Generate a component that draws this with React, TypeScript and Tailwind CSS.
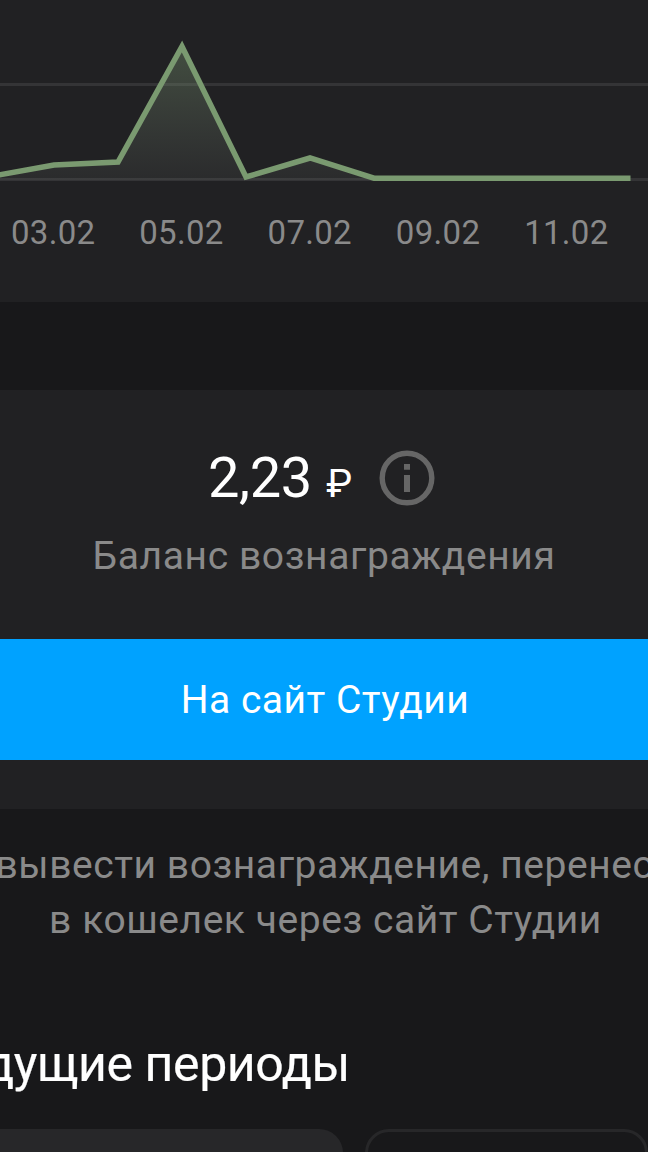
const dates = ["03.02", "05.02", "07.02", "09.02", "11.02"];

function ViewsChart() {
  return (
    <svg className="block h-[200px] w-full" viewBox="0 0 648 200" fill="none">
      <defs>
        <linearGradient id="area" x1="0" y1="45" x2="0" y2="180" gradientUnits="userSpaceOnUse">
          <stop offset="0" stopColor="#7a9a70" stopOpacity="0.38" />
          <stop offset="1" stopColor="#808880" stopOpacity="0.1" />
        </linearGradient>
      </defs>
      <path d="M0 84.5H648M0 179.5H648" stroke="#343436" strokeWidth="3" />
      <path
        d="M-4 176L54 165L118 162L182 46L246 177L310 158L374 178H630V180H-4Z"
        fill="url(#area)"
      />
      <path
        d="M-4 175.5L54 165L118 162L182 46.5L246 177L310 158L374 178.2H630.5"
        stroke="#7a9a70"
        strokeWidth="5.5"
      />
    </svg>
  );
}

function InfoIcon() {
  return (
    <svg className="size-14" viewBox="0 0 56 56" fill="none">
      <circle cx="28" cy="28" r="24.8" stroke="#666666" strokeWidth="5.4" />
      <path d="M28 14V19.7M28 25V42" stroke="#666666" strokeWidth="6" />
    </svg>
  );
}

export default function App() {
  return (
    <main className="flex h-[1152px] w-[648px] flex-col overflow-hidden bg-[#18181a] font-[Roboto,sans-serif] text-white">
      <section className="h-[302px] shrink-0 bg-[#212123]">
        <ViewsChart />
        <div className="-ml-[11px] flex pt-3">
          {dates.map((date) => (
            <span
              key={date}
              className="w-[128.3px] shrink-0 text-center text-[33px] leading-[42px] tracking-[0.3px] text-[#8a8a8a]"
            >
              {date}
            </span>
          ))}
        </div>
      </section>

      <section className="mt-[88px] h-[419px] shrink-0 bg-[#212123] pt-[60px] text-center">
        <div className="flex h-14 items-center pl-[208px]">
          <p className="w-[171px] pt-1.5 text-left text-[56px] leading-14 tracking-[-0.4px] whitespace-nowrap">
            2,23 <span className="ml-px text-[39px]">₽</span>
          </p>
          <InfoIcon />
        </div>
        <p className="mt-[26px] text-[39px] leading-12 tracking-[0.6px] text-[#8a8a8a]">
          Баланс вознаграждения
        </p>
        <button
          type="button"
          className="mt-[59px] block h-[121px] w-full bg-[#00a2ff] pt-0.5 pl-0.5 text-[39px] tracking-[0.5px]"
        >
          На сайт Студии
        </button>
      </section>

      <p className="mt-[29px] flex shrink-0 flex-col items-center text-[39px] leading-[55px] tracking-[0.55px] whitespace-nowrap text-[#8a8a8a]">
        <span className="pl-px">вывести вознаграждение, перенес</span>
        <span className="pl-[3px]">в кошелек через сайт Студии</span>
      </p>

      <h2 className="mt-[84px] -ml-[16px] shrink-0 text-[50px] leading-[64px] tracking-[-0.4px] whitespace-nowrap [-webkit-text-stroke:0.2px_white]">
        дущие периоды
      </h2>

      <div className="mt-[33px] flex shrink-0 gap-[22px]">
        <div className="-ml-10 h-20 w-[383px] shrink-0 rounded-[24px] bg-[#272729]" />
        <div className="h-20 w-[283px] shrink-0 rounded-[24px] border-[3px] border-[#272729]" />
      </div>
    </main>
  );
}
